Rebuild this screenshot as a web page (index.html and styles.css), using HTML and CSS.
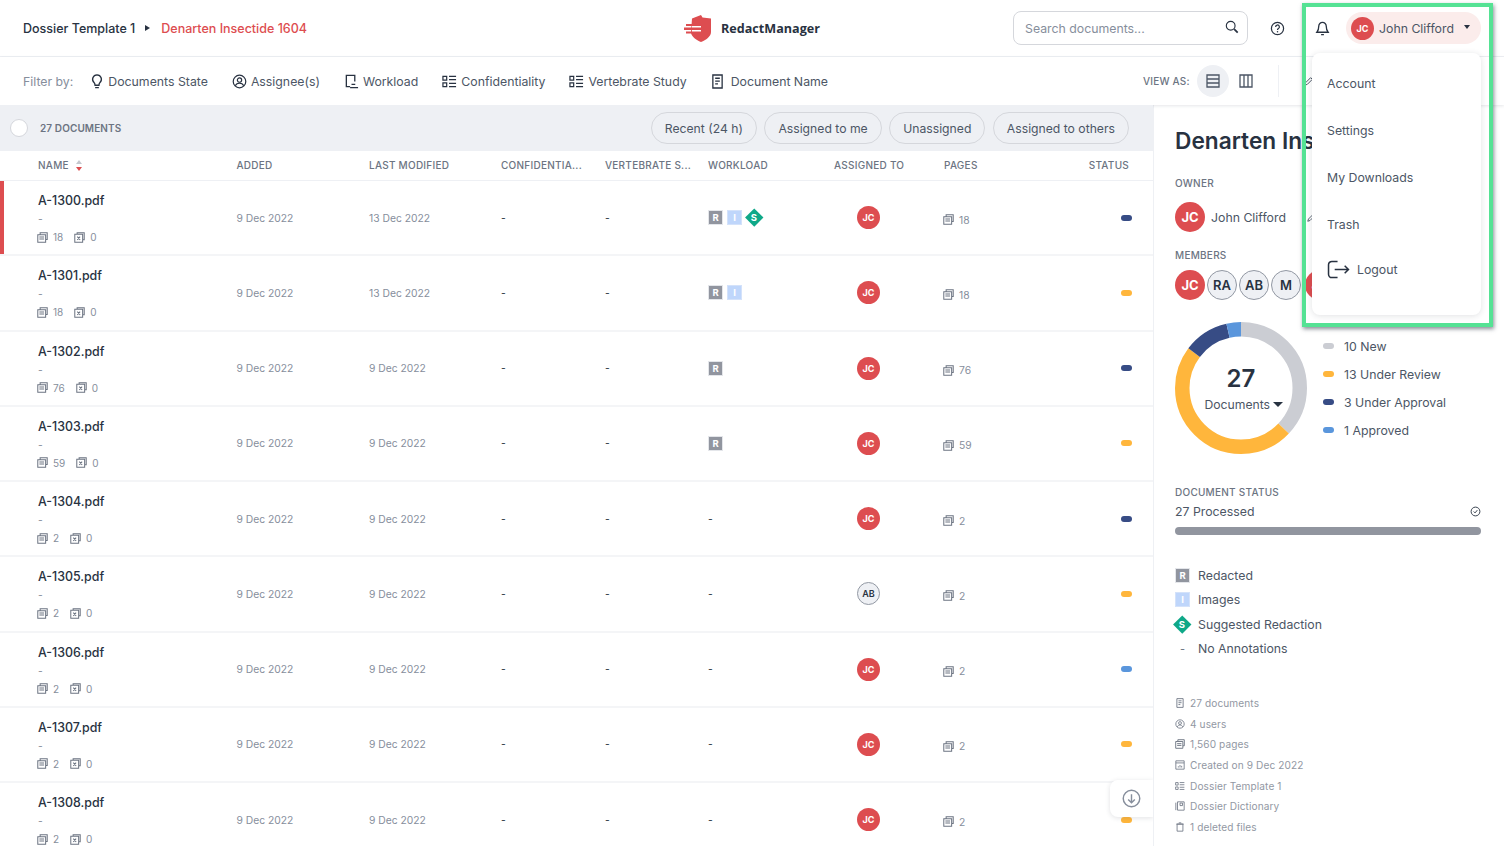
FILE: index.html
```html
<!DOCTYPE html>
<html lang="en">
<head>
    <meta charset="UTF-8">
    <title>RedactManager</title>
    <link rel="stylesheet" href="styles.css">
</head>
<body>
    <svg class="defs" width="0" height="0">
        <symbol id="i-bulb" viewBox="0 0 12 16"><path d="M6 1a4.700 4.700 0 0 0-3 8.300c.6.5.8 1.500.9 2.700h4.200c.1-1.200.3-2.200.9-2.700A4.700 4.700 0 0 0 6 1zM4 14.500h4" fill="none" stroke="currentColor" stroke-width="1.400"/></symbol>
        <symbol id="i-user" viewBox="0 0 16 16"><circle cx="8" cy="8" r="6.700" fill="none" stroke="currentColor" stroke-width="1.300"/><circle cx="8" cy="6.500" r="2.300" fill="none" stroke="currentColor" stroke-width="1.300"/><path d="M3.500 12.500c1-2 2.500-2.800 4.500-2.800s3.500.8 4.500 2.800" fill="none" stroke="currentColor" stroke-width="1.300"/></symbol>
        <symbol id="i-workload" viewBox="0 0 16 16"><path d="M11.500 8V1.500h-9v12h4M8 11h4M6.500 14.500h8.500" fill="none" stroke="currentColor" stroke-width="1.400"/></symbol>
        <symbol id="i-list" viewBox="0 0 16 14"><path d="M1 1.500h4v4H1zM1 8.500h4v4H1zM7.500 1.500H15M7.500 5H15M7.500 9H15M7.500 12.500H15" fill="none" stroke="currentColor" stroke-width="1.300"/></symbol>
        <symbol id="i-doc" viewBox="0 0 14 16"><path d="M2 1h10v14H2zM4.500 4.500h5M4.500 7.500h5M4.500 10.500h3" fill="none" stroke="currentColor" stroke-width="1.400"/></symbol>
        <symbol id="i-pages" viewBox="0 0 14 14"><path d="M4 3V1h9v8.500h-2M1 3.500h10V13H1zM3 6.500h6M3 9h6" fill="none" stroke="currentColor" stroke-width="1.300"/></symbol>
        <symbol id="i-excluded" viewBox="0 0 14 14"><path d="M4 2.500V1h9v9h-2M1 3h10v10H1zM4.200 6l3.600 4M7.800 6l-3.600 4" fill="none" stroke="currentColor" stroke-width="1.300"/></symbol>
        <symbol id="i-search" viewBox="0 0 16 16"><circle cx="6.500" cy="6.500" r="5" fill="none" stroke="currentColor" stroke-width="1.300"/><path d="M10.500 10.500l4 4" stroke="currentColor" stroke-width="2"/></symbol>
        <symbol id="i-help" viewBox="0 0 16 16"><circle cx="8" cy="8" r="6.500" fill="none" stroke="currentColor" stroke-width="1.300"/><path d="M6 6.300a2 2 0 1 1 3 1.700c-.7.400-1 .8-1 1.500" fill="none" stroke="currentColor" stroke-width="1.300"/><circle cx="8" cy="11.500" r=".8" fill="currentColor"/></symbol>
        <symbol id="i-bell" viewBox="0 0 16 16"><path d="M8 1.500a4 4 0 0 0-4 4c0 3.500-.8 5-2 6.500h12c-1.200-1.500-2-3-2-6.500a4 4 0 0 0-4-4zM6.500 14.500h3" fill="none" stroke="currentColor" stroke-width="1.400"/></symbol>
        <symbol id="i-rows" viewBox="0 0 14 14"><path d="M1 1h12v12H1zM1 5h12M1 9h12" fill="none" stroke="currentColor" stroke-width="1.300"/></symbol>
        <symbol id="i-cols" viewBox="0 0 14 14"><path d="M1 1h12v12H1zM5 1v12M9 1v12" fill="none" stroke="currentColor" stroke-width="1.300"/></symbol>
        <symbol id="i-pencil" viewBox="0 0 12 12"><path d="M1 11l1-3 6-6 2 2-6 6z" fill="none" stroke="currentColor" stroke-width="1.200"/></symbol>
        <symbol id="i-logout" viewBox="0 0 24 20"><path d="M11 1.500H5a3.500 3.500 0 0 0-3.500 3.500v10A3.500 3.500 0 0 0 5 18.500h6M8 10h14.500M18.500 6l4 4-4 4" fill="none" stroke="currentColor" stroke-width="1.600"/></symbol>
        <symbol id="i-check" viewBox="0 0 12 12"><circle cx="6" cy="6" r="4.800" fill="none" stroke="currentColor"/><path d="M4 6l1.500 1.500L8 4.500" fill="none" stroke="currentColor"/></symbol>
        <symbol id="i-down" viewBox="0 0 20 20"><circle cx="10" cy="10" r="8.700" fill="none" stroke="currentColor" stroke-width="1.500"/><path d="M10 5.500v9M6.500 11l3.500 3.500 3.500-3.500" fill="none" stroke="currentColor" stroke-width="1.500"/></symbol>
        <symbol id="i-calendar" viewBox="0 0 12 12"><path d="M1 1h10v10H1zM1 3.500h10M4 9V7.500M6 9V6M8 9V7" fill="none" stroke="currentColor"/></symbol>
        <symbol id="i-book" viewBox="0 0 12 12"><path d="M3 1h8v10H3zM1 2v9M6 2.500h3v3H6z" fill="none" stroke="currentColor"/></symbol>
        <symbol id="i-trash" viewBox="0 0 12 12"><path d="M2.500 2.500h7V11h-7zM4.500 1h3M1.500 2.500h9" fill="none" stroke="currentColor"/></symbol>
    </svg>

    <header class="topbar">
        <div class="crumbs">
            <span>Dossier Template 1</span>
            <span class="crumb-arrow"></span>
            <span class="crumb-active">Denarten Insectide 1604</span>
        </div>
        <div class="logo">
            <svg width="27" height="27" viewBox="0 0 27 27">
                <path d="M8 3.500L17 0l1.500 2.500L27 3.500V17c0 4.500-5 8-10 10-5-2-9-5-10-9z" fill="#dd4d50"/>
                <path d="M2 9h9v2H2zM0 12.500h11v2.500H0zM2 16.500h9v2H2z" fill="#dd4d50"/>
                <path d="M8 11h9v1.500H8zM8 15h9v1.500H8z" fill="#fff"/>
            </svg>
            <span>RedactManager</span>
        </div>
        <div class="top-actions">
            <div class="search">
                <span>Search documents...</span>
                <svg class="search-icon"><use href="#i-search"/></svg>
            </div>
            <svg class="top-icon help-icon"><use href="#i-help"/></svg>
            <svg class="top-icon bell-icon"><use href="#i-bell"/></svg>
            <div class="user-btn">
                <span class="avatar small">JC</span>
                <span>John Clifford</span>
                <span class="caret"></span>
            </div>
        </div>
    </header>

    <div class="filterbar">
        <span class="filter-label">Filter by:</span>
        <span class="filter"><svg class="bulb"><use href="#i-bulb"/></svg>Documents State</span>
        <span class="filter"><svg><use href="#i-user"/></svg>Assignee(s)</span>
        <span class="filter"><svg><use href="#i-workload"/></svg>Workload</span>
        <span class="filter"><svg><use href="#i-list"/></svg>Confidentiality</span>
        <span class="filter"><svg><use href="#i-list"/></svg>Vertebrate Study</span>
        <span class="filter"><svg class="doc"><use href="#i-doc"/></svg>Document Name</span>
        <div class="view-as">
            <span class="view-label">VIEW AS:</span>
            <span class="view-btn active"><svg><use href="#i-rows"/></svg></span>
            <span class="view-btn"><svg><use href="#i-cols"/></svg></span>
            <span class="view-divider"></span>
            <svg class="view-pencil"><use href="#i-pencil"/></svg>
        </div>
    </div>

    <div class="content">
        <main class="docs">
            <div class="band">
                <span class="check"></span>
                <span class="count">27 DOCUMENTS</span>
                <div class="pills">
                    <span class="pill">Recent (24 h)</span>
                    <span class="pill">Assigned to me</span>
                    <span class="pill">Unassigned</span>
                    <span class="pill">Assigned to others</span>
                </div>
            </div>

            <div class="cols head">
                <span class="sort-cell">NAME <span class="sort"><i class="up"></i><i class="down"></i></span></span>
                <span>ADDED</span>
                <span>LAST MODIFIED</span>
                <span>CONFIDENTIA...</span>
                <span>VERTEBRATE S...</span>
                <span>WORKLOAD</span>
                <span>ASSIGNED TO</span>
                <span>PAGES</span>
                <span class="right">STATUS</span>
            </div>

            <div class="cols row flagged">
                <div class="name-cell"><b>A-1300.pdf</b><span class="dash">-</span><div class="meta"><svg><use href="#i-pages"/></svg><span>18</span><svg><use href="#i-excluded"/></svg><span>0</span></div></div>
                <span class="date">9 Dec 2022</span><span class="date">13 Dec 2022</span><span>-</span><span>-</span>
                <div class="work"><span class="badge r">R</span><span class="badge i">I</span><span class="diamond"><b>S</b></span></div>
                <div class="who"><span class="avatar small">JC</span></div>
                <div class="pages"><svg><use href="#i-pages"/></svg>18</div>
                <div class="right"><span class="status approval"></span></div>
            </div>
            <div class="cols row">
                <div class="name-cell"><b>A-1301.pdf</b><span class="dash">-</span><div class="meta"><svg><use href="#i-pages"/></svg><span>18</span><svg><use href="#i-excluded"/></svg><span>0</span></div></div>
                <span class="date">9 Dec 2022</span><span class="date">13 Dec 2022</span><span>-</span><span>-</span>
                <div class="work"><span class="badge r">R</span><span class="badge i">I</span></div>
                <div class="who"><span class="avatar small">JC</span></div>
                <div class="pages"><svg><use href="#i-pages"/></svg>18</div>
                <div class="right"><span class="status review"></span></div>
            </div>
            <div class="cols row">
                <div class="name-cell"><b>A-1302.pdf</b><span class="dash">-</span><div class="meta"><svg><use href="#i-pages"/></svg><span>76</span><svg><use href="#i-excluded"/></svg><span>0</span></div></div>
                <span class="date">9 Dec 2022</span><span class="date">9 Dec 2022</span><span>-</span><span>-</span>
                <div class="work"><span class="badge r">R</span></div>
                <div class="who"><span class="avatar small">JC</span></div>
                <div class="pages"><svg><use href="#i-pages"/></svg>76</div>
                <div class="right"><span class="status approval"></span></div>
            </div>
            <div class="cols row">
                <div class="name-cell"><b>A-1303.pdf</b><span class="dash">-</span><div class="meta"><svg><use href="#i-pages"/></svg><span>59</span><svg><use href="#i-excluded"/></svg><span>0</span></div></div>
                <span class="date">9 Dec 2022</span><span class="date">9 Dec 2022</span><span>-</span><span>-</span>
                <div class="work"><span class="badge r">R</span></div>
                <div class="who"><span class="avatar small">JC</span></div>
                <div class="pages"><svg><use href="#i-pages"/></svg>59</div>
                <div class="right"><span class="status review"></span></div>
            </div>
            <div class="cols row">
                <div class="name-cell"><b>A-1304.pdf</b><span class="dash">-</span><div class="meta"><svg><use href="#i-pages"/></svg><span>2</span><svg><use href="#i-excluded"/></svg><span>0</span></div></div>
                <span class="date">9 Dec 2022</span><span class="date">9 Dec 2022</span><span>-</span><span>-</span>
                <div class="work">-</div>
                <div class="who"><span class="avatar small">JC</span></div>
                <div class="pages"><svg><use href="#i-pages"/></svg>2</div>
                <div class="right"><span class="status approval"></span></div>
            </div>
            <div class="cols row">
                <div class="name-cell"><b>A-1305.pdf</b><span class="dash">-</span><div class="meta"><svg><use href="#i-pages"/></svg><span>2</span><svg><use href="#i-excluded"/></svg><span>0</span></div></div>
                <span class="date">9 Dec 2022</span><span class="date">9 Dec 2022</span><span>-</span><span>-</span>
                <div class="work">-</div>
                <div class="who"><span class="avatar small grey">AB</span></div>
                <div class="pages"><svg><use href="#i-pages"/></svg>2</div>
                <div class="right"><span class="status review"></span></div>
            </div>
            <div class="cols row">
                <div class="name-cell"><b>A-1306.pdf</b><span class="dash">-</span><div class="meta"><svg><use href="#i-pages"/></svg><span>2</span><svg><use href="#i-excluded"/></svg><span>0</span></div></div>
                <span class="date">9 Dec 2022</span><span class="date">9 Dec 2022</span><span>-</span><span>-</span>
                <div class="work">-</div>
                <div class="who"><span class="avatar small">JC</span></div>
                <div class="pages"><svg><use href="#i-pages"/></svg>2</div>
                <div class="right"><span class="status approved"></span></div>
            </div>
            <div class="cols row">
                <div class="name-cell"><b>A-1307.pdf</b><span class="dash">-</span><div class="meta"><svg><use href="#i-pages"/></svg><span>2</span><svg><use href="#i-excluded"/></svg><span>0</span></div></div>
                <span class="date">9 Dec 2022</span><span class="date">9 Dec 2022</span><span>-</span><span>-</span>
                <div class="work">-</div>
                <div class="who"><span class="avatar small">JC</span></div>
                <div class="pages"><svg><use href="#i-pages"/></svg>2</div>
                <div class="right"><span class="status review"></span></div>
            </div>
            <div class="cols row">
                <div class="name-cell"><b>A-1308.pdf</b><span class="dash">-</span><div class="meta"><svg><use href="#i-pages"/></svg><span>2</span><svg><use href="#i-excluded"/></svg><span>0</span></div></div>
                <span class="date">9 Dec 2022</span><span class="date">9 Dec 2022</span><span>-</span><span>-</span>
                <div class="work">-</div>
                <div class="who"><span class="avatar small">JC</span></div>
                <div class="pages"><svg><use href="#i-pages"/></svg>2</div>
                <div class="right"><span class="status review"></span></div>
            </div>

            <div class="scroll-btn"><svg><use href="#i-down"/></svg></div>
        </main>

        <aside class="panel">
            <h1>Denarten Insectide 1604</h1>
            <div class="panel-label owner-label">OWNER</div>
            <div class="owner">
                <span class="avatar big">JC</span>
                <span>John Clifford</span>
                <svg class="owner-pencil"><use href="#i-pencil"/></svg>
            </div>
            <div class="panel-label members-label">MEMBERS</div>
            <div class="members">
                <span class="avatar big">JC</span>
                <span class="avatar big grey">RA</span>
                <span class="avatar big grey">AB</span>
                <span class="avatar big grey">M</span>
                <span class="avatar big">JC</span>
            </div>

            <div class="chart-row">
                <div class="donut">
                    <svg width="132" height="132" viewBox="0 0 132 132">
                        <g fill="none" stroke-width="14.500" transform="rotate(-90 66 66)">
                            <circle cx="66" cy="66" r="58.750" stroke="#cbcdd3" stroke-dasharray="136.700 369.100"/>
                            <circle cx="66" cy="66" r="58.750" stroke="#ffb63c" stroke-dasharray="177.700 369.100" stroke-dashoffset="-136.700"/>
                            <circle cx="66" cy="66" r="58.750" stroke="#374c85" stroke-dasharray="41 369.100" stroke-dashoffset="-314.400"/>
                            <circle cx="66" cy="66" r="58.750" stroke="#5a96dc" stroke-dasharray="13.700 369.100" stroke-dashoffset="-355.400"/>
                        </g>
                    </svg>
                    <div class="donut-text">
                        <b>27</b>
                        <span>Documents <i class="caret"></i></span>
                    </div>
                </div>
                <ul class="legend">
                    <li><span class="status new"></span>10 New</li>
                    <li><span class="status review"></span>13 Under Review</li>
                    <li><span class="status approval"></span>3 Under Approval</li>
                    <li><span class="status approved"></span>1 Approved</li>
                </ul>
            </div>

            <div class="panel-label status-label">DOCUMENT STATUS</div>
            <div class="processed"><span>27 Processed</span><svg><use href="#i-check"/></svg></div>
            <div class="bar"></div>

            <ul class="types">
                <li><span class="type-icon"><span class="badge r">R</span></span>Redacted</li>
                <li><span class="type-icon"><span class="badge i">I</span></span>Images</li>
                <li><span class="type-icon"><span class="diamond"><b>S</b></span></span>Suggested Redaction</li>
                <li><span class="type-icon">-</span>No Annotations</li>
            </ul>

            <ul class="stats">
                <li><svg><use href="#i-doc"/></svg>27 documents</li>
                <li><svg><use href="#i-user"/></svg>4 users</li>
                <li><svg><use href="#i-pages"/></svg>1,560 pages</li>
                <li><svg><use href="#i-calendar"/></svg>Created on 9 Dec 2022</li>
                <li><svg><use href="#i-list"/></svg>Dossier Template 1</li>
                <li><svg><use href="#i-book"/></svg>Dossier Dictionary</li>
                <li><svg><use href="#i-trash"/></svg>1 deleted files</li>
            </ul>
        </aside>
    </div>

    <div class="user-menu">
        <a>Account</a>
        <a>Settings</a>
        <a>My Downloads</a>
        <a>Trash</a>
        <a class="logout"><svg><use href="#i-logout"/></svg>Logout</a>
    </div>
    <div class="highlight"></div>
</body>
</html>
```

FILE: styles.css
```css
* {
    box-sizing: border-box;
}
html, body {
    height: 100%;
}
body {
    margin: 0;
    overflow: hidden;
    font-family: Inter, "Noto Sans", sans-serif;
    font-size: 12.300px;
    color: #283241;
    background: #fff;
    position: relative;
}
ul {
    list-style: none;
    margin: 0;
    padding: 0;
}
.defs {
    position: absolute;
}

/* top bar */
.topbar {
    height: 57px;
    display: grid;
    grid-template-columns: 1fr auto 1fr;
    align-items: center;
    padding: 0 23px;
    border-bottom: 1px solid #eef0f4;
}
.crumbs {
    display: flex;
    align-items: center;
    padding-top: 1px;
    font-size: 12.500px;
    font-weight: 500;
}
.crumb-arrow {
    width: 0;
    height: 0;
    margin: 0 11px 2px 10px;
    border-left: 5px solid #283241;
    border-top: 3.500px solid transparent;
    border-bottom: 3.500px solid transparent;
}
.crumb-active {
    color: #dd4d50;
}
.logo {
    display: flex;
    align-items: center;
    gap: 10px;
    font-family: "Open Sans", sans-serif;
    font-weight: 700;
    font-size: 12.600px;
}
.top-actions {
    display: flex;
    align-items: center;
    justify-content: flex-end;
}
.search {
    width: 235px;
    height: 34px;
    display: flex;
    align-items: center;
    justify-content: space-between;
    padding: 0 8px 0 11px;
    border: 1px solid #d5d7dc;
    border-radius: 8px;
    color: #868e9c;
}
.search-icon {
    width: 14px;
    height: 14px;
    margin-bottom: 2px;
    color: #283241;
}
.top-icon {
    width: 15px;
    height: 15px;
}
.help-icon {
    margin-left: 22px;
}
.bell-icon {
    margin: 0 16px 0 30px;
}
.user-btn {
    width: 135px;
    height: 32px;
    display: flex;
    align-items: center;
    gap: 5px;
    padding-left: 5px;
    border-radius: 16px;
    background: #fbeceb;
    color: #4c5665;
}
.caret {
    display: inline-block;
    width: 0;
    height: 0;
    border-top: 4px solid #283241;
    border-left: 3.500px solid transparent;
    border-right: 3.500px solid transparent;
}
.user-btn .caret {
    margin-left: 5px;
    margin-bottom: 2px;
}

/* avatars */
.avatar {
    display: inline-flex;
    align-items: center;
    justify-content: center;
    flex: none;
    border-radius: 50%;
    background: #dd4d50;
    color: #fff;
    font-weight: 700;
}
.avatar.small {
    width: 23px;
    height: 23px;
    font-size: 9px;
}
.avatar.big {
    width: 30px;
    height: 30px;
    font-size: 13px;
}
.avatar.grey {
    background: #eef0f4;
    color: #283241;
    border: 1px solid #9298a3;
    font-weight: 600;
}

/* filter row */
.filterbar {
    height: 48px;
    display: flex;
    align-items: center;
    padding: 0 23px 0;
    color: #4c5665;
    box-shadow: 0 1px 3px rgba(40, 50, 65, .12);
    position: relative;
}
.filter-label {
    color: #868e9c;
    margin-right: 18px;
}
.filter {
    display: flex;
    align-items: center;
    gap: 4px;
    margin-right: 24px;
}
.filter svg {
    width: 15px;
    height: 15px;
    color: #283241;
}
.filter svg.bulb {
    width: 12px;
    margin-right: 1px;
}
.filter svg.doc {
    width: 13px;
    margin-right: 3px;
}
.view-as {
    margin-left: auto;
    margin-right: -23px;
    width: 361px;
    display: flex;
    align-items: center;
}
.view-label {
    font-size: 10px;
    font-weight: 500;
    color: #6c7482;
    letter-spacing: .2px;
    margin-right: 7px;
}
.view-btn {
    width: 32px;
    height: 32px;
    display: flex;
    align-items: center;
    justify-content: center;
    border-radius: 50%;
    margin-right: 1px;
}
.view-btn.active {
    background: #eef0f4;
}
.view-btn svg {
    width: 14px;
    height: 14px;
}
.view-divider {
    width: 1px;
    height: 32px;
    background: #eef0f4;
    margin-left: 15px;
}
.view-pencil {
    width: 10px;
    height: 10px;
    margin-left: 25px;
}

/* document table */
.content {
    display: flex;
    height: calc(100% - 105px);
}
.docs {
    width: 1153px;
    flex: none;
    position: relative;
    overflow: hidden;
}
.band {
    height: 46px;
    display: flex;
    align-items: center;
    padding: 0 24px 0 10px;
    background: #eef0f4;
}
.check {
    width: 18px;
    height: 18px;
    border-radius: 50%;
    background: #fff;
    border: 1px solid #d5d7dc;
    margin-right: 12px;
}
.count {
    font-size: 10px;
    font-weight: 600;
    letter-spacing: .1px;
    color: #6c7482;
}
.pills {
    margin-left: auto;
    display: flex;
    gap: 7.500px;
}
.pill {
    height: 32px;
    display: flex;
    align-items: center;
    padding: 0 13px;
    border: 1px solid #d5d7dc;
    border-radius: 16px;
    font-size: 12.200px;
    color: #4c5665;
}
.cols {
    display: grid;
    grid-template-columns: 198.500px 132.500px 132px 104px 103px 126px 110px 1fr 60px;
    align-items: center;
    padding: 0 24px 0 38px;
}
.head {
    height: 30px;
    padding-bottom: 1px;
    font-size: 10px;
    font-weight: 500;
    letter-spacing: .25px;
    color: #6c7482;
    border-bottom: 1px solid #eef0f4;
}
.sort-cell {
    display: flex;
    align-items: center;
    gap: 7px;
}
.sort {
    display: inline-flex;
    flex-direction: column;
    gap: 3px;
}
.sort i {
    width: 0;
    height: 0;
    border-left: 3.500px solid transparent;
    border-right: 3.500px solid transparent;
}
.sort .up {
    border-bottom: 4px solid #c4c7ce;
}
.sort .down {
    border-top: 4px solid #dd4d50;
}
.right {
    text-align: right;
}
.row {
    height: 75.250px;
    border-bottom: 2px solid #f4f5f7;
    position: relative;
    color: #283241;
    font-size: 10.300px;
}
.row.flagged::before {
    content: "";
    position: absolute;
    left: 0;
    top: 0;
    bottom: 0;
    width: 4px;
    background: #dd4d50;
}
.name-cell {
    align-self: start;
    display: flex;
    flex-direction: column;
    padding-top: 12px;
}
.name-cell b {
    font-size: 12.400px;
    line-height: 16px;
    font-weight: 500;
}
.dash {
    line-height: 16px;
    margin-top: 2px;
    color: #868e9c;
}
.meta {
    height: 14px;
    margin-top: 3px;
    margin-left: -1px;
    display: flex;
    align-items: center;
    color: #868e9c;
    font-size: 10px;
}
.meta svg {
    width: 11px;
    height: 11px;
    color: #6c7482;
    margin-right: 5px;
}
.meta span {
    margin-right: 11px;
}
.date {
    color: #868e9c;
}
.work {
    display: flex;
    align-items: center;
    gap: 4px;
}
.badge {
    width: 15px;
    height: 15px;
    display: inline-flex;
    align-items: center;
    justify-content: center;
    font-size: 9.500px;
    font-weight: 700;
    color: #fff;
    border: 1px solid #e4e6ea;
}
.badge.r {
    background: #91959f;
}
.badge.i {
    background: #bfd6fb;
    border-color: #d4e2fa;
}
.diamond {
    width: 12.500px;
    height: 12.500px;
    margin: 0 2px;
    display: inline-flex;
    align-items: center;
    justify-content: center;
    background: #0fa888;
    transform: rotate(45deg);
}
.diamond b {
    transform: rotate(-45deg);
    font-size: 9.500px;
    color: #fff;
}
.who {
    padding-left: 23px;
}
.who .avatar {
    display: flex;
}
.pages {
    display: flex;
    align-items: center;
    gap: 5px;
    margin-top: 4px;
    margin-left: -1px;
    color: #868e9c;
}
.pages svg {
    width: 11px;
    height: 11px;
    color: #6c7482;
}
.status {
    display: inline-block;
    width: 11px;
    height: 6px;
    border-radius: 3px;
}
.row .right {
    margin-right: -3px;
    line-height: 0;
}
.status.new {
    background: #cbcdd3;
}
.status.review {
    background: #ffb63c;
}
.status.approval {
    background: #374c85;
}
.status.approved {
    background: #5a96dc;
}
.scroll-btn {
    position: absolute;
    right: 0;
    top: 675px;
    width: 43px;
    height: 37px;
    display: flex;
    align-items: center;
    justify-content: center;
    background: #fff;
    border-radius: 8px 0 0 8px;
    box-shadow: 0 1px 5px rgba(40, 50, 65, .14);
}
.scroll-btn svg {
    width: 19px;
    height: 19px;
    color: #868e9c;
}

/* right panel */
.panel {
    flex: 1;
    min-width: 0;
    overflow: hidden;
    padding: 21px 23px 0 21px;
    border-left: 1px solid #eef0f4;
}
.panel h1 {
    margin: 0;
    font-size: 22.700px;
    line-height: 30px;
    font-weight: 600;
    white-space: nowrap;
}
.panel-label {
    font-size: 10px;
    line-height: 14px;
    font-weight: 500;
    letter-spacing: .25px;
    color: #6c7482;
}
.owner-label {
    margin-top: 20px;
}
.owner {
    display: flex;
    align-items: center;
    gap: 6px;
    margin-top: 12px;
    color: #4c5665;
}
.owner-pencil {
    width: 9px;
    height: 9px;
    margin-left: 15px;
}
.members-label {
    margin-top: 15.500px;
}
.members {
    display: flex;
    gap: 2px;
    margin-top: 8.500px;
}
.members .avatar:last-child {
    margin-left: 2px;
}
.chart-row {
    display: flex;
    gap: 16px;
    margin-top: 22px;
}
.donut {
    display: grid;
    width: 132px;
    height: 132px;
}
.donut > * {
    grid-area: 1 / 1;
}
.donut-text {
    display: flex;
    flex-direction: column;
    align-items: center;
    justify-content: center;
    font-size: 12.200px;
    color: #4c5665;
}
.donut-text b {
    font-size: 24px;
    line-height: 30px;
    font-weight: 600;
    color: #283241;
}
.donut-text span {
    margin-top: 3px;
    margin-left: 6px;
}
.donut-text .caret {
    border-top-width: 5px;
    border-left-width: 5px;
    border-right-width: 5px;
    vertical-align: 2px;
}
.legend {
    padding-top: 10px;
    color: #4c5665;
}
.legend li {
    height: 28px;
    display: flex;
    align-items: center;
    gap: 10px;
}
.status-label {
    margin-top: 31px;
}
.processed {
    height: 18px;
    margin-top: 3px;
    display: flex;
    align-items: center;
    justify-content: space-between;
    color: #4c5665;
}
.processed svg {
    width: 11px;
    height: 11px;
    color: #283241;
}
.bar {
    height: 8px;
    margin-top: 7px;
    border-radius: 4px;
    background: #91959f;
}
.types {
    margin-top: 28px;
    color: #4c5665;
}
.types li {
    height: 24.500px;
    display: flex;
    align-items: center;
}
.type-icon {
    width: 15px;
    display: flex;
    justify-content: center;
    margin-right: 8px;
    font-size: 11px;
    color: #6c7482;
}
.type-icon .diamond {
    flex: none;
}
.stats {
    margin-top: 32px;
    font-size: 10.100px;
    letter-spacing: .1px;
    color: #9298a3;
}
.stats li {
    height: 20.600px;
    display: flex;
    align-items: center;
    gap: 5px;
}
.stats svg {
    width: 10px;
    height: 10px;
    color: #6c7482;
}

/* user dropdown, opened */
.user-menu {
    position: absolute;
    left: 1312px;
    top: 53px;
    width: 169px;
    height: 262px;
    padding-top: 6.500px;
    background: #fff;
    border-radius: 8px;
    box-shadow: 0 1px 6px rgba(40, 50, 65, .14);
    color: #4c5665;
}
.user-menu a {
    height: 47px;
    display: flex;
    align-items: center;
    padding-left: 15px;
}
.user-menu .logout {
    gap: 7px;
    margin-top: -2px;
}
.logout svg {
    width: 23px;
    height: 19px;
    color: #283241;
}
.highlight {
    position: absolute;
    left: 1302px;
    top: 3px;
    width: 191px;
    height: 324px;
    border: 4px solid #55e294;
    box-shadow: 1px 2px 4px rgba(40, 50, 65, .55);
    pointer-events: none;
}
```
